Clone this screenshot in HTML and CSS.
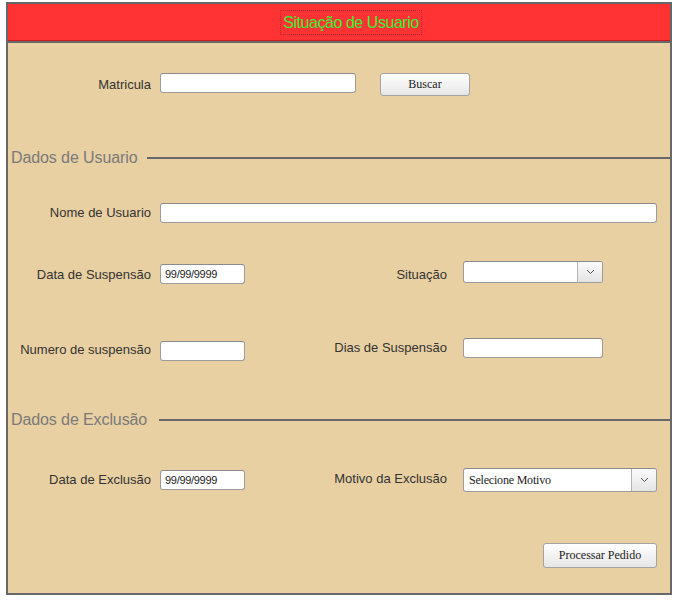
FILE: index.html
```html
<!DOCTYPE html>
<html lang="pt">
<head>
<meta charset="utf-8">
<title>Situação de Usuario</title>
<link rel="stylesheet" href="styles.css">
</head>
<body>
<div class="frame">
  <div class="header"><span class="title">Situação de Usuario</span></div>
  <div class="content">
    <div class="row row-mat">
      <label class="lbl lbl-mat">Matricula</label>
      <input class="inp inp-mat" type="text">
      <button class="btn btn-buscar" type="button">Buscar</button>
    </div>

    <div class="legend legend-1"><span class="legend-text">Dados de Usuario</span><span class="legend-line"></span></div>

    <div class="grid row-nome">
      <label class="lbl c1">Nome de Usuario</label>
      <input class="inp span3" type="text">
    </div>

    <div class="grid row-susp">
      <label class="lbl c1 m4">Data de Suspensão</label>
      <input class="inp date m3" type="text" value="99/99/9999">
      <label class="lbl c3 m4">Situação</label>
      <div class="select sel-sit"><span class="select-value"></span><span class="select-arrow"><svg width="9" height="6" viewBox="0 0 9 6"><path d="M1 1 L4.5 4.5 L8 1" fill="none" stroke="#555" stroke-width="1"/></svg></span></div>
    </div>

    <div class="grid row-num">
      <label class="lbl c1 m2">Numero de suspensão</label>
      <input class="inp short m3" type="text">
      <label class="lbl c3">Dias de Suspensão</label>
      <input class="inp inp-dias" type="text">
    </div>

    <div class="legend legend-2"><span class="legend-text">Dados de Exclusão</span><span class="legend-line"></span></div>

    <div class="grid row-exc">
      <label class="lbl c1 m2">Data de Exclusão</label>
      <input class="inp date m2" type="text" value="99/99/9999">
      <label class="lbl c3 m1">Motivo da Exclusão</label>
      <div class="select sel-mot"><span class="select-value">Selecione Motivo</span><span class="select-arrow"><svg width="9" height="6" viewBox="0 0 9 6"><path d="M1 1 L4.5 4.5 L8 1" fill="none" stroke="#555" stroke-width="1"/></svg></span></div>
    </div>

    <div class="row row-proc">
      <button class="btn btn-proc" type="button">Processar Pedido</button>
    </div>
  </div>
</div>
</body>
</html>
```
FILE: styles.css
```css
html, body {
  margin: 0;
  padding: 0;
  background: #ffffff;
}

body {
  font-family: "Liberation Sans", Arial, sans-serif;
}

.frame {
  margin: 2px 0 0 6px;
  width: 662px;
  border: 2px solid #686868;
}

.header {
  height: 36px;
  background: #ff3333;
  border-bottom: 1px solid #cc1a1a;
  display: flex;
  align-items: center;
  justify-content: center;
  padding-left: 24px;
  box-sizing: content-box;
}

.title {
  color: #33f033;
  font-size: 16px;
  line-height: 19px;
  letter-spacing: -0.45px;
  outline: 1px dotted #b8283c;
  outline-offset: 2px;
}

.content {
  border-top: 2px solid #686868;
  background: #e8d0a2;
  height: 550px;
  display: flex;
  flex-direction: column;
}

.lbl {
  font-size: 13px;
  color: #333333;
  line-height: 20px;
  text-align: right;
}

.inp {
  box-sizing: border-box;
  height: 20px;
  border: 1px solid #9c9c9c;
  border-top-color: #8a8a8a;
  border-radius: 3px;
  background: #ffffff;
  margin: 0;
  padding: 0 4px;
  font-family: "Liberation Sans", Arial, sans-serif;
  font-size: 11px;
  letter-spacing: -0.3px;
  color: #222;
  outline: none;
}

.row {
  display: flex;
  align-items: flex-start;
}

.row-mat {
  margin-top: 30px;
  height: 23px;
}

.lbl-mat {
  width: 143px;
  padding-right: 9px;
  line-height: 23px;
}

.inp-mat {
  width: 196px;
}

.btn {
  box-sizing: border-box;
  font-family: "Liberation Serif", "Times New Roman", serif;
  font-size: 12px;
  color: #222;
  background: linear-gradient(#ffffff, #e6e6e6);
  border: 1px solid #a3a3a3;
  border-radius: 3px;
  padding: 0;
  margin: 0;
}

.btn-buscar {
  width: 90px;
  height: 23px;
  margin-left: 24px;
}

.legend {
  display: flex;
  align-items: center;
  height: 20px;
  padding-left: 3px;
}

.legend-text {
  font-size: 16px;
  color: #7a7a7a;
  white-space: nowrap;
  letter-spacing: -0.1px;
}

.legend-line {
  flex: 1;
  height: 2px;
  background: #686868;
  margin-left: 10px;
}

.legend-1 {
  margin-top: 52px;
}

.legend-2 {
  margin-top: 49px;
}

.legend-2 .legend-line {
  margin-left: 12px;
}

.grid {
  display: grid;
  grid-template-columns: 152px 85px 218px 194px;
  align-items: start;
}

.c1 {
  padding-right: 9px;
}

.c3 {
  padding-right: 16px;
}

.span3 {
  grid-column: 2 / span 3;
  width: 100%;
}

.m1 { margin-top: 1px; }
.m2 { margin-top: 2px; }
.m3 { margin-top: 3px; }
.m4 { margin-top: 4px; }

.row-nome {
  margin-top: 35px;
  height: 20px;
}

.row-susp {
  margin-top: 38px;
  height: 23px;
}

.row-num {
  margin-top: 54px;
  height: 23px;
}

.row-exc {
  margin-top: 38px;
  height: 24px;
}

.date, .short {
  width: 85px;
  padding-left: 4px;
}

.inp-dias {
  width: 140px;
}

.select {
  box-sizing: border-box;
  display: flex;
  border: 1px solid #9c9c9c;
  border-top-color: #8a8a8a;
  border-radius: 3px;
  background: #ffffff;
  overflow: hidden;
}

.select-value {
  flex: 1;
  font-family: "Liberation Serif", "Times New Roman", serif;
  font-size: 12px;
  letter-spacing: -0.2px;
  color: #222;
  padding-left: 5px;
  display: flex;
  align-items: center;
}

.select-arrow {
  width: 24px;
  border-left: 1px solid #b4b4b4;
  background: linear-gradient(#fbfbfb, #e4e4e4);
  display: flex;
  align-items: center;
  justify-content: center;
}

.sel-sit {
  width: 140px;
  height: 22px;
}

.sel-mot {
  width: 194px;
  height: 24px;
}

.row-proc {
  margin-top: 51px;
  justify-content: flex-end;
  padding-right: 13px;
}

.btn-proc {
  width: 114px;
  height: 25px;
}
```
